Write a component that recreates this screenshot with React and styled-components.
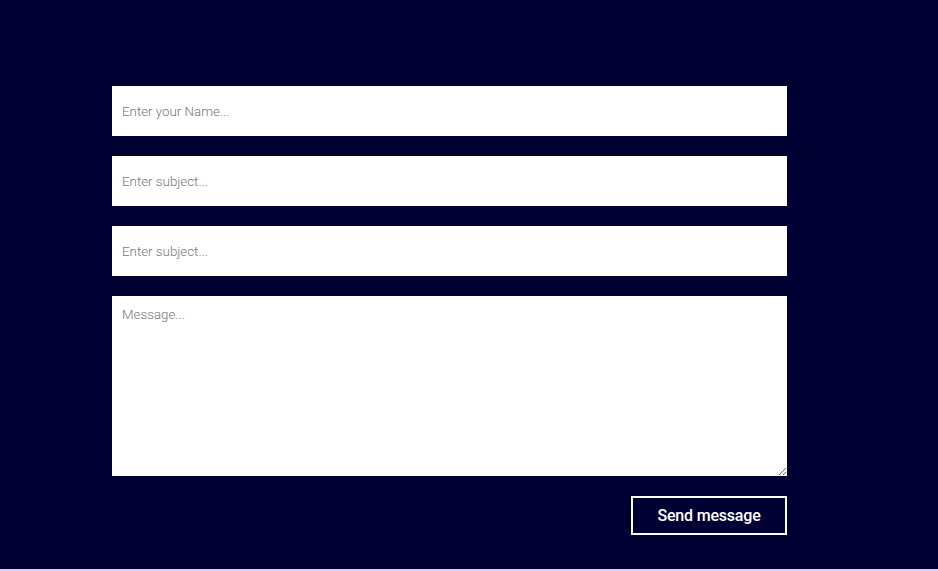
import React from "react";
import styled, { createGlobalStyle } from "styled-components";

const Global = createGlobalStyle`
  html, body { margin: 0; padding: 0; background: #d8d8e6; }
  * { box-sizing: border-box; }
`;

const Section = styled.section`
  background: #000033;
  height: 569px;
  padding: 86px 0 0 112px;
  font-family: Roboto, "Liberation Sans", sans-serif;
`;

const Form = styled.form`
  width: 675px;
  display: flex;
  flex-direction: column;
  gap: 20px;
`;

const Input = styled.input`
  height: 50px;
  border: none;
  outline: none;
  background: #fff;
  padding: 0 10px;
  font-family: Roboto, sans-serif;
  font-weight: 300;
  font-size: 13.33px;
  color: #333;
  &::placeholder { color: #7a7572; }
`;

const TextArea = styled.textarea`
  height: 180px;
  border: none;
  outline: none;
  background: #fff;
  padding: 11px 10px;
  font-family: Roboto, sans-serif;
  font-weight: 300;
  font-size: 13.33px;
  resize: vertical;
  &::placeholder { color: #7a7572; }
`;

const Actions = styled.div`
  display: flex;
  justify-content: flex-end;
`;

const Button = styled.button`
  width: 156px;
  height: 39px;
  background: transparent;
  border: 2px solid #fff;
  color: #fff;
  font-family: Roboto, sans-serif;
  font-size: 16px;
  font-weight: 500;
  letter-spacing: -0.2px;
  cursor: pointer;
`;

export default function App() {
  return (
    <>
      <Global />
      <Section>
        <Form onSubmit={(e) => e.preventDefault()}>
          <Input placeholder="Enter your Name..." />
          <Input placeholder="Enter subject..." />
          <Input placeholder="Enter subject..." />
          <TextArea placeholder="Message..." />
          <Actions>
            <Button type="submit">Send message</Button>
          </Actions>
        </Form>
      </Section>
    </>
  );
}
